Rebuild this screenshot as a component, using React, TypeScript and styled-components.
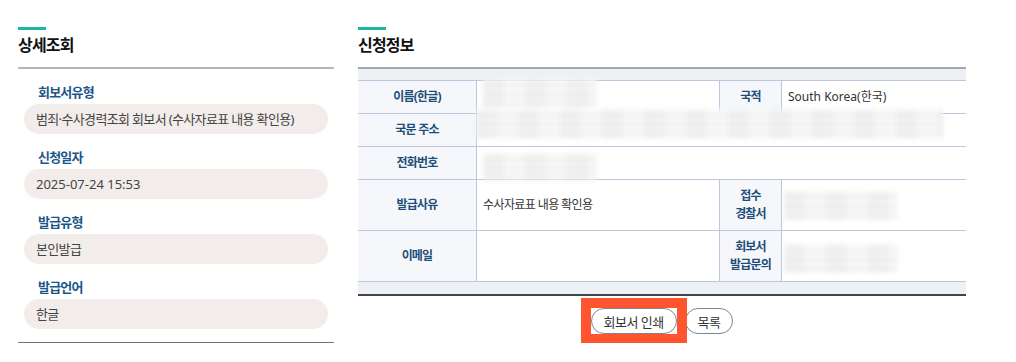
import React from 'react';
import styled, { createGlobalStyle } from 'styled-components';

const GlobalStyle = createGlobalStyle`
  html, body {
    margin: 0;
    padding: 0;
    background: #ffffff;
  }
  body {
    font-family: "Noto Sans", "Noto Sans CJK KR", sans-serif;
    color: #333333;
    letter-spacing: -0.05em;
  }
  * {
    box-sizing: border-box;
  }
`;

const Page = styled.div`
  display: flex;
  gap: 24px;
  padding: 27px 0 0 18px;
`;

const Panel = styled.section<{ $width: number }>`
  width: ${props => props.$width}px;
  flex: none;
`;

const AccentBar = styled.div`
  width: 28px;
  height: 3px;
  background-color: #1db5a6;
`;

const SectionTitle = styled.h2`
  margin: 2px 0 9px;
  font-size: 16px;
  line-height: 26px;
  font-weight: 700;
  color: #111111;
`;

const DetailList = styled.dl`
  margin: 0;
  padding: 0 6px 13px;
  border-top: 2px solid #b5b5b9;
  border-bottom: 1px solid #6e737b;
`;

const DetailLabel = styled.dt`
  margin: 13px 0 2px 14px;
  font-size: 13px;
  line-height: 20px;
  font-weight: 700;
  color: #1a5689;
`;

const DetailValue = styled.dd<{ $plain?: boolean }>`
  margin: 0;
  height: 30px;
  padding: 0 12px;
  border-radius: 15px;
  background-color: #f2edea;
  font-size: 13px;
  line-height: 30px;
  color: #444444;
  letter-spacing: ${props => props.$plain ? '0' : '-0.05em'};
  white-space: nowrap;
`;

const InfoTable = styled.table`
  width: 100%;
  border-collapse: separate;
  border-spacing: 0;
  border-top: 2px solid #a5a7ab;
  border-bottom: 2px solid #41454c;
  table-layout: fixed;
`;

const BandCell = styled.td<{ $last?: boolean }>`
  height: 12px;
  padding: 0;
  background-color: #edf1f6;
  border-bottom: ${props => props.$last ? 'none' : '1px solid #bcc6dd'};
`;

const HeadCell = styled.th<{ $tall?: boolean }>`
  height: ${props => props.$tall ? 51 : 33}px;
  padding: 0 4px;
  background-color: #f5f7fa;
  border-bottom: 1px solid #bcc6dd;
  border-right: 1px solid #bcc6dd;
  font-size: 12px;
  line-height: 18px;
  font-weight: 700;
  color: #1d4e7a;
  text-align: center;
  vertical-align: middle;
`;

const HeadCellInner = styled(HeadCell)`
  border-left: 1px solid #bcc6dd;
`;

const DataCell = styled.td<{ $plain?: boolean }>`
  padding: 0 6px;
  border-bottom: 1px solid #bcc6dd;
  font-size: 12px;
  line-height: 18px;
  color: #333333;
  vertical-align: middle;
  white-space: nowrap;
  letter-spacing: ${props => props.$plain ? '0' : '-0.05em'};
`;

const Redacted = styled.div<{ $w: number; $h: number; $dx?: number; $dy?: number }>`
  width: ${props => props.$w}px;
  height: ${props => props.$h}px;
  background-color: #f2f2f2;
  background-image:
    linear-gradient(90deg, rgba(0, 0, 0, 0.025) 50%, transparent 50%),
    linear-gradient(rgba(255, 255, 255, 0.5) 50%, transparent 50%);
  background-size: 42px 100%, 100% 9px;
  filter: blur(2.5px);
  transform: translate(${props => props.$dx || 0}px, ${props => props.$dy || 0}px);
`;

const ButtonRow = styled.div`
  display: flex;
  justify-content: center;
  gap: 8px;
  margin-top: 12px;
`;

const Highlight = styled.span`
  position: relative;
  z-index: 1;
  display: inline-flex;
  background-color: #ffffff;
  outline: 10px solid #ff5430;
`;

const PillButton = styled.button`
  height: 26px;
  padding: 0 12px;
  border: 1px solid #7d8593;
  border-radius: 13px;
  background-color: #ffffff;
  font-family: inherit;
  font-size: 13px;
  letter-spacing: -0.04em;
  color: #333333;
  cursor: pointer;
`;

const details = [
  { label: '회보서유형', value: '범죄·수사경력조회 회보서 (수사자료표 내용 확인용)' },
  { label: '신청일자', value: '2025-07-24 15:53', plain: true },
  { label: '발급유형', value: '본인발급' },
  { label: '발급언어', value: '한글' },
];

export default function App() {
  return (
    <>
      <GlobalStyle />
      <Page>
        <Panel $width={316}>
          <AccentBar />
          <SectionTitle>상세조회</SectionTitle>
          <DetailList>
            {details.map(item => (
              <React.Fragment key={item.label}>
                <DetailLabel>{item.label}</DetailLabel>
                <DetailValue $plain={item.plain}>{item.value}</DetailValue>
              </React.Fragment>
            ))}
          </DetailList>
        </Panel>

        <Panel $width={608}>
          <AccentBar />
          <SectionTitle>신청정보</SectionTitle>
          <InfoTable>
            <colgroup>
              <col style={{ width: 119 }} />
              <col style={{ width: 242 }} />
              <col style={{ width: 63 }} />
              <col />
            </colgroup>
            <thead>
              <tr>
                <BandCell colSpan={4} />
              </tr>
            </thead>
            <tbody>
              <tr>
                <HeadCell>이름(한글)</HeadCell>
                <DataCell>
                  <Redacted $w={114} $h={30} $dy={-3} />
                </DataCell>
                <HeadCellInner>국적</HeadCellInner>
                <DataCell $plain>South Korea(한국)</DataCell>
              </tr>
              <tr>
                <HeadCell>국문 주소</HeadCell>
                <DataCell colSpan={3}>
                  <Redacted $w={467} $h={30} $dx={-7} $dy={-6} />
                </DataCell>
              </tr>
              <tr>
                <HeadCell>전화번호</HeadCell>
                <DataCell colSpan={3}>
                  <Redacted $w={114} $h={27} $dy={3} />
                </DataCell>
              </tr>
              <tr>
                <HeadCell $tall>발급사유</HeadCell>
                <DataCell>수사자료표 내용 확인용</DataCell>
                <HeadCellInner $tall>접수<br />경찰서</HeadCellInner>
                <DataCell>
                  <Redacted $w={114} $h={29} $dx={-4} />
                </DataCell>
              </tr>
              <tr>
                <HeadCell $tall>이메일</HeadCell>
                <DataCell />
                <HeadCellInner $tall>회보서<br />발급문의</HeadCellInner>
                <DataCell>
                  <Redacted $w={114} $h={29} $dx={-4} $dy={2} />
                </DataCell>
              </tr>
              <tr>
                <BandCell colSpan={4} $last />
              </tr>
            </tbody>
          </InfoTable>
          <ButtonRow>
            <Highlight>
              <PillButton type="button">회보서 인쇄</PillButton>
            </Highlight>
            <PillButton type="button">목록</PillButton>
          </ButtonRow>
        </Panel>
      </Page>
    </>
  );
}
